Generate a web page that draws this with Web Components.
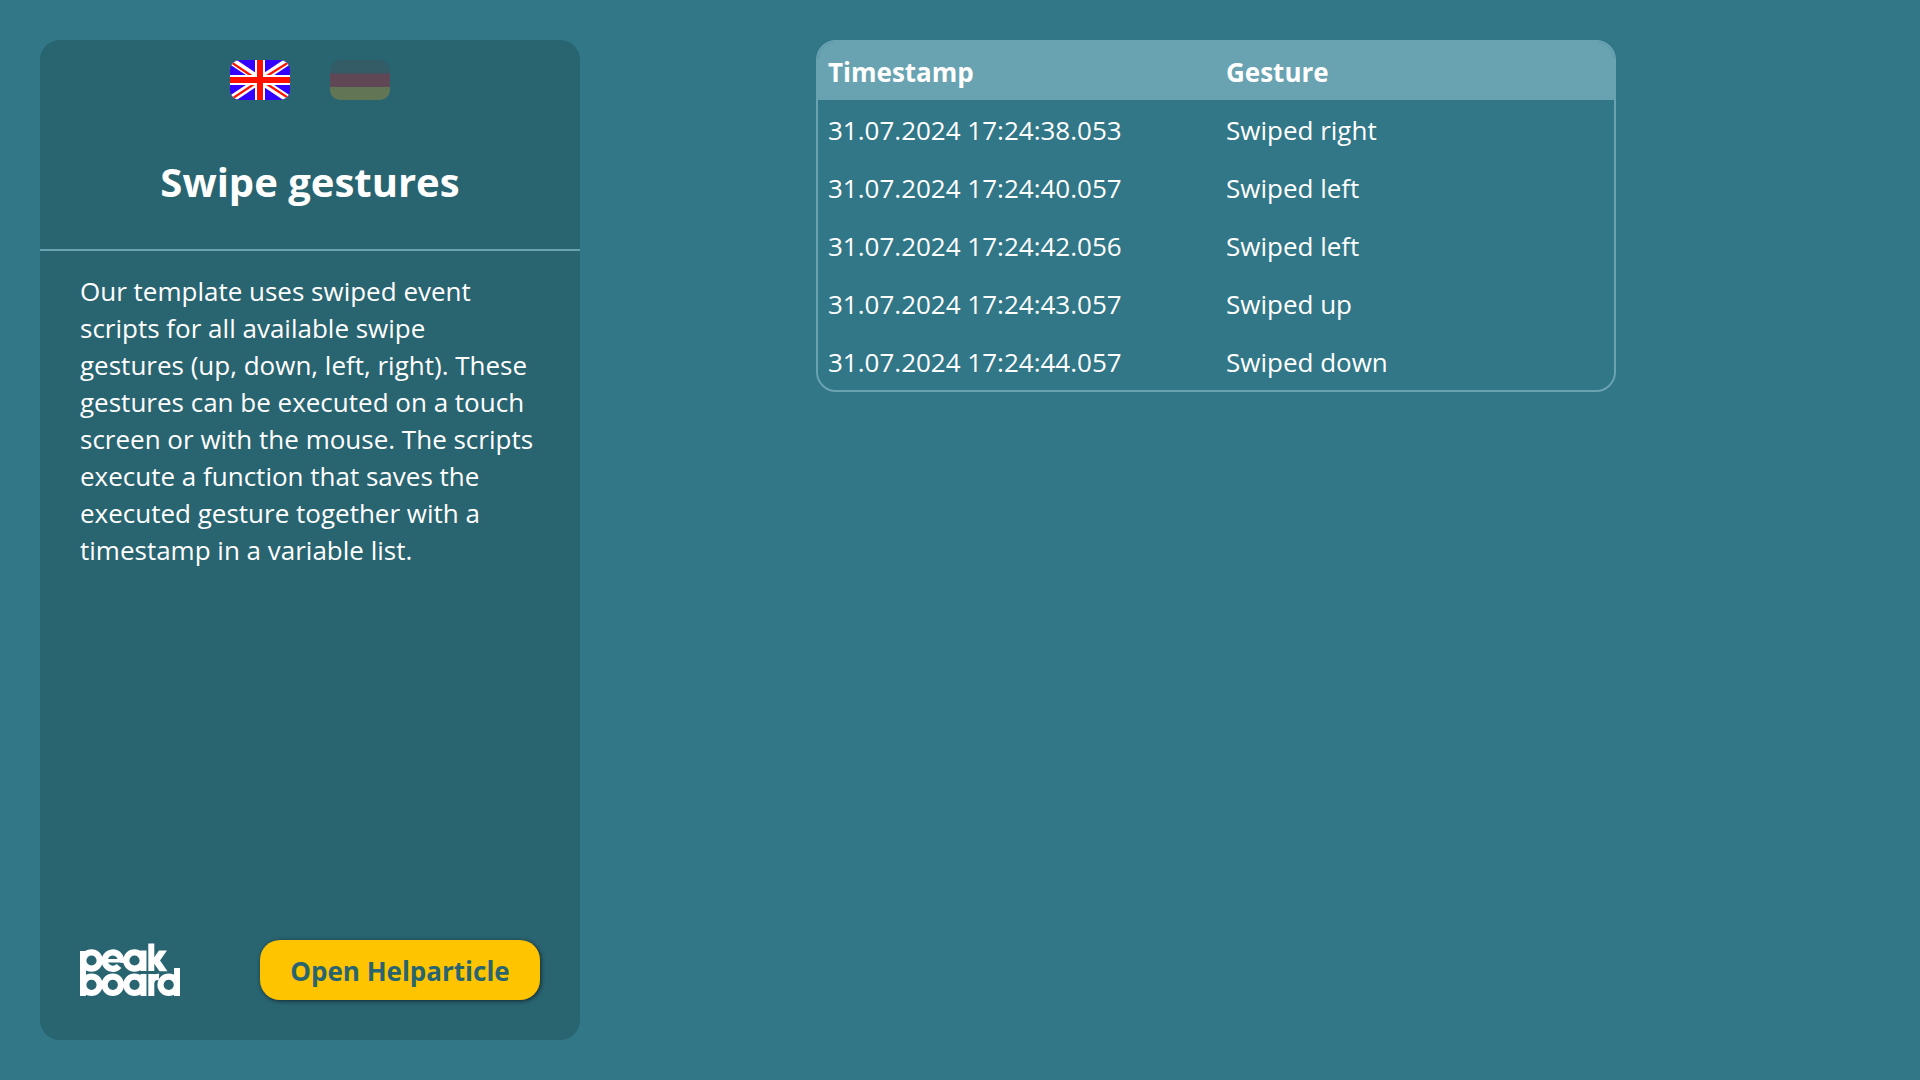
<!DOCTYPE html>
<html lang="en">
<head>
<meta charset="utf-8">
<title>Swipe gestures</title>
<style>
html { background: #317787; }
body { margin: 0; color: #fff; font: 26px/37px "Open Sans", "Noto Sans", sans-serif; }
</style>
</head>
<body>
<swipe-app></swipe-app>
<script>
const define = (name, html) => {
  const template = document.createElement('template');
  template.innerHTML = html;
  customElements.define(name, class extends HTMLElement {
    constructor() {
      super();
      this.attachShadow({ mode: 'open' }).append(template.content.cloneNode(true));
    }
  });
};

define('language-switch', `
<style>
:host { display: flex; justify-content: center; gap: 40px; }
button { display: block; width: 60px; height: 40px; padding: 0; border: 0; border-radius: 10px; overflow: hidden; background: none; cursor: pointer; }
button[aria-pressed="false"] { opacity: .3; }
svg { display: block; width: 100%; height: 100%; }
</style>
<button aria-label="English" aria-pressed="true">
  <svg viewBox="0 0 60 40" aria-hidden="true">
    <rect width="60" height="40" fill="#30f"/>
    <path d="M0 0L60 40M60 0L0 40" stroke="#fff" stroke-width="7.400"/>
    <path d="M0 1.500L24 17.500M60 1.500L36 16.500" stroke="#f10" stroke-width="2.200"/>
    <path d="M0 40L25 23.500M60 39L36 23.500" stroke="#f10" stroke-width="2.200"/>
    <path d="M30 0V40M0 20H60" stroke="#fff" stroke-width="10"/>
    <path d="M30 0V40M0 20H60" stroke="#f10" stroke-width="6"/>
  </svg>
</button>
<button aria-label="Deutsch" aria-pressed="false">
  <svg viewBox="0 0 60 40" aria-hidden="true">
    <rect width="60" height="14" fill="#4a4a50"/>
    <rect y="13.500" width="60" height="13.500" fill="#e0051a"/>
    <rect y="27" width="60" height="13" fill="#e6a21a"/>
  </svg>
</button>`);

define('peakboard-logo', `
<style>
:host { display: block; width: 100px; }
svg { display: block; width: 100%; }
</style>
<svg viewBox="0 0 100 54" role="img" aria-label="peakboard">
  <g fill="#fff">
    <rect y="8" width="6" height="45"/>
    <rect x="60.500" y="7.500" width="6" height="20.500"/>
    <rect x="68.300" y="0.500" width="6" height="27.500"/>
    <rect x="60.500" y="31" width="6" height="22"/>
    <rect x="68.300" y="31" width="6" height="22"/>
    <rect x="94" y="25" width="6" height="28"/>
    <rect x="26" y="16" width="16" height="3.500"/>
    <path d="M79 7.500H87L80 17.500L87.500 28.200H79.500L73 19V16Z"/>
  </g>
  <g fill="none" stroke="#fff" stroke-width="6.200">
    <circle cx="11.500" cy="17.500" r="8.200"/>
    <path d="M40.800 19.500A8.200 8.200 0 1 0 39 23"/>
    <circle cx="54.500" cy="17.500" r="8.200"/>
    <circle cx="11.500" cy="41.800" r="8.200"/>
    <circle cx="32.800" cy="41.800" r="8.200"/>
    <circle cx="54.500" cy="41.800" r="8.200"/>
    <circle cx="88.700" cy="41.800" r="8.200"/>
    <path d="M71.500 39C72 35 74.500 33.600 79 33.900"/>
  </g>
</svg>`);

define('info-panel', `
<style>
:host { display: flex; flex-direction: column; box-sizing: border-box; padding: 20px 0 40px; border-radius: 20px; background: #296471; }
header { display: flex; flex-direction: column; gap: 52px; padding-bottom: 37px; border-bottom: 2px solid #69a3b1; }
h1 { margin: 0; font-size: 40px; line-height: 60px; text-align: center; }
.body { flex: 1; padding: 22px 40px; }
footer { display: flex; justify-content: space-between; align-items: center; padding: 0 40px; }
</style>
<header>
  <language-switch></language-switch>
  <h1><slot name="title"></slot></h1>
</header>
<div class="body"><slot></slot></div>
<footer><peakboard-logo></peakboard-logo><slot name="action"></slot></footer>`);

define('help-button', `
<style>
:host { display: block; }
button { width: 280px; height: 60px; padding: 2px 0 0; border: 0; border-radius: 20px; background: #ffc400; color: #296471; font: inherit; font-weight: 700; box-shadow: 1px 1px 4px rgba(0,0,0,.6); cursor: pointer; }
</style>
<button><slot></slot></button>`);

define('gesture-table', `
<style>
:host { display: block; border: 2px solid #69a3b1; border-radius: 20px; overflow: hidden; }
table { width: 100%; table-layout: fixed; border-collapse: collapse; }
th, td { height: 58px; box-sizing: border-box; padding: 2px 10px 0; text-align: left; vertical-align: middle; }
thead { background: #69a3b1; }
</style>
<table>
  <thead><tr><th scope="col">Timestamp</th><th scope="col">Gesture</th></tr></thead>
  <tbody>
    <tr><td>31.07.2024 17:24:38.053</td><td>Swiped right</td></tr>
    <tr><td>31.07.2024 17:24:40.057</td><td>Swiped left</td></tr>
    <tr><td>31.07.2024 17:24:42.056</td><td>Swiped left</td></tr>
    <tr><td>31.07.2024 17:24:43.057</td><td>Swiped up</td></tr>
    <tr><td>31.07.2024 17:24:44.057</td><td>Swiped down</td></tr>
  </tbody>
</table>`);

define('swipe-app', `
<style>
:host { display: grid; grid-template-columns: 540px 236fr 800fr 264fr; box-sizing: border-box; min-height: 100vh; padding: 40px; }
gesture-table { grid-column: 3; align-self: start; }
p { margin: 0; }
</style>
<info-panel>
  <span slot="title">Swipe gestures</span>
  <p>Our template uses swiped event scripts for all available swipe gestures&nbsp;(up, down, left, right). These gestures can be executed on a touch screen or with the mouse. The scripts execute a function that saves the executed gesture together with a timestamp in a variable list.</p>
  <help-button slot="action">Open Helparticle</help-button>
</info-panel>
<gesture-table></gesture-table>`);
</script>
</body>
</html>
